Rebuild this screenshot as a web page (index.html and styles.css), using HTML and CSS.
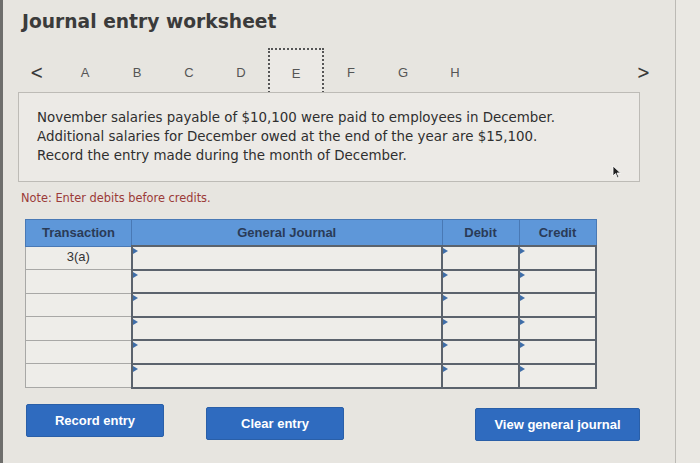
FILE: index.html
```html
<!DOCTYPE html>
<html lang="en">

<head>
    <meta charset="UTF-8">
    <meta name="viewport" content="width=device-width, initial-scale=1.0">
    <title>Journal entry worksheet</title>
    <link rel="stylesheet" href="styles.css">
</head>

<body>
    <div class="page">
        <div class="frame">
            <h1 class="title">Journal entry worksheet</h1>

            <div class="steps">
                <span class="arrow">&lt;</span>
                <span class="step">A</span>
                <span class="step">B</span>
                <span class="step">C</span>
                <span class="step">D</span>
                <span class="step active">E</span>
                <span class="step">F</span>
                <span class="step">G</span>
                <span class="step">H</span>
                <span class="arrow next">&gt;</span>
            </div>

            <div class="prompt">
                <p>November salaries payable of $10,100 were paid to employees in December.</p>
                <p>Additional salaries for December owed at the end of the year are $15,100.</p>
                <p>Record the entry made during the month of December.</p>
                <svg class="pointer" width="10" height="14" viewBox="0 0 10 14">
                    <path d="M1 1 L1 11 L3.5 8.5 L5.5 13 L7 12.3 L5 8 L8.5 8 Z" fill="#222" stroke="#fff" stroke-width="0.8"/>
                </svg>
            </div>

            <p class="note">Note: Enter debits before credits.</p>

            <table class="journal">
                <thead>
                    <tr>
                        <th class="col-trans">Transaction</th>
                        <th class="col-acct">General Journal</th>
                        <th class="col-num">Debit</th>
                        <th class="col-num">Credit</th>
                    </tr>
                </thead>
                <tbody>
                    <tr>
                        <td class="trans">3(a)</td>
                        <td class="entry"></td>
                        <td class="entry"></td>
                        <td class="entry"></td>
                    </tr>
                    <tr>
                        <td class="trans"></td>
                        <td class="entry"></td>
                        <td class="entry"></td>
                        <td class="entry"></td>
                    </tr>
                    <tr>
                        <td class="trans"></td>
                        <td class="entry"></td>
                        <td class="entry"></td>
                        <td class="entry"></td>
                    </tr>
                    <tr>
                        <td class="trans"></td>
                        <td class="entry"></td>
                        <td class="entry"></td>
                        <td class="entry"></td>
                    </tr>
                    <tr>
                        <td class="trans"></td>
                        <td class="entry"></td>
                        <td class="entry"></td>
                        <td class="entry"></td>
                    </tr>
                    <tr>
                        <td class="trans"></td>
                        <td class="entry"></td>
                        <td class="entry"></td>
                        <td class="entry"></td>
                    </tr>
                </tbody>
            </table>

            <div class="buttons">
                <button class="btn">Record entry</button>
                <button class="btn clear">Clear entry</button>
                <button class="btn view">View general journal</button>
            </div>
        </div>
        <div class="side"></div>
    </div>
</body>

</html>
```

FILE: styles.css
```css
body {
    margin: 0;
    background-color: #e7e5e0;
    font-family: "Liberation Sans", Arial, sans-serif;
}

.page {
    display: flex;
    height: 463px;
    overflow: hidden;
}

.frame {
    width: 676px;
    border-left: 3px solid #6e6e6c;
    border-right: 1px solid #bcbab5;
    padding-left: 15px;
    box-sizing: border-box;
}

.side {
    flex: 1;
    background-color: #eae8e3;
}

.title {
    font-family: "DejaVu Sans", Verdana, sans-serif;
    font-size: 18.7px;
    font-weight: bold;
    color: #3b3b3b;
    margin: 11px 0 0 4px;
    line-height: 22px;
}

/* step tabs */
.steps {
    display: flex;
    align-items: center;
    height: 48px;
    margin-top: 15px;
}

.arrow {
    font-family: "DejaVu Sans", sans-serif;
    font-size: 20px;
    color: #3a3a3a;
    width: 41px;
    padding-left: 10px;
    box-sizing: border-box;
    transform: scaleX(0.8);
}

.arrow.next {
    margin-left: auto;
    margin-right: 22px;
    width: auto;
}

.step {
    width: 52px;
    text-align: center;
    font-size: 13px;
    color: #555;
}

.step.active {
    width: 56px;
    height: 48px;
    line-height: 48px;
    box-sizing: border-box;
    border: 2px dotted #555;
    background-color: #ebe9e5;
    margin: 0 1px;
}

/* question box */
.prompt {
    position: relative;
    border: 1px solid #bdbbb6;
    background-color: #eceae6;
    margin: -4px 35px 0 0;
    height: 90px;
    box-sizing: border-box;
    padding: 15px 0 0 18px;
}

.prompt p {
    margin: 0;
    font-family: "DejaVu Sans", Verdana, sans-serif;
    font-size: 13.4px;
    line-height: 19px;
    color: #2f2f2f;
}

.pointer {
    position: absolute;
    right: 17px;
    bottom: 2px;
}

.note {
    font-family: "DejaVu Sans", Verdana, sans-serif;
    font-size: 11.4px;
    color: #9b3a38;
    margin: 9px 0 0 3px;
}

/* journal table */
.journal {
    border-collapse: collapse;
    margin: 14px 0 0 7px;
    width: 572px;
}

.journal th {
    background-color: #5e97d9;
    color: #2a3b57;
    font-size: 13px;
    height: 25px;
    border: 1px solid #4979b5;
    padding: 0;
}

.col-trans {
    width: 105px;
}

.col-num {
    width: 76px;
}

.journal td {
    height: 20.6px;
    padding: 0;
    background-color: #eeede9;
}

.trans {
    border: 1px solid #a8a8a6;
    text-align: center;
    font-size: 13px;
    color: #333;
    vertical-align: top;
    padding-top: 2px !important;
}

.entry {
    position: relative;
    border: 2px solid #5b636d;
}

.entry::before {
    content: "";
    position: absolute;
    left: 0;
    top: 1px;
    border-left: 5px solid #3f6ea8;
    border-top: 3px solid transparent;
    border-bottom: 3px solid transparent;
}

/* bottom buttons */
.buttons {
    display: flex;
    align-items: flex-start;
    margin: 15px 0 0 8px;
}

.btn {
    background-color: #2f6bbf;
    color: #fff;
    border: 1px solid #2a5fa8;
    border-radius: 2px;
    font-family: "Liberation Sans", Arial, sans-serif;
    font-size: 13px;
    font-weight: bold;
    width: 138px;
    height: 33px;
}

.btn.clear {
    margin-left: 42px;
    margin-top: 3px;
}

.btn.view {
    margin-left: auto;
    margin-right: 35px;
    width: 165px;
    margin-top: 4px;
}
```
